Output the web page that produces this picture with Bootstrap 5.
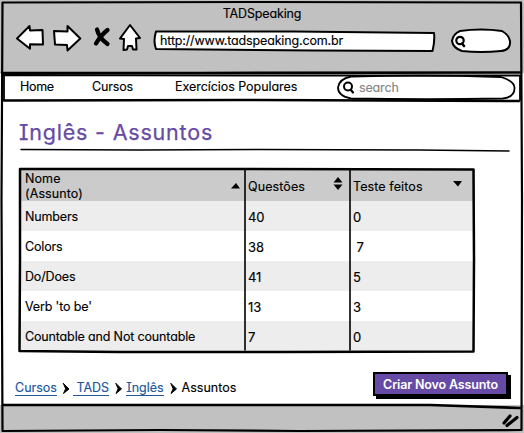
<!DOCTYPE html>
<html lang="pt-br">
<head>
<meta charset="utf-8">
<meta name="viewport" content="width=device-width, initial-scale=1">
<title>TADSpeaking</title>
<link href="https://cdn.jsdelivr.net/npm/bootstrap@5.3.0/dist/css/bootstrap.min.css" rel="stylesheet">
<style>
body{font-family:Inter,"Open Sans",sans-serif;font-size:12.5px;letter-spacing:-.15px;font-feature-settings:"cv11","cv08";line-height:16px;color:#000;background:#fff;overflow:hidden;-webkit-text-stroke:.15px currentColor}
svg{display:block;overflow:visible;fill:none;stroke:#000;stroke-linejoin:round;stroke-linecap:round;flex-shrink:0}
.window{width:524px;height:433px;background:#fff}
.sketch{left:0;top:0;pointer-events:none}
.chrome{height:73px;background:#c1c1c1;padding-top:6px}
.tools{height:32px;padding-left:15px;margin-top:2px}
.address{width:282px;height:20px;margin-left:28px;padding-left:6px;line-height:20px;letter-spacing:-.15px;margin-top:1px}
.finder{width:60px;height:25px;margin-left:15px}
.menu{height:29px;padding-left:20px}
.menu a{color:#000;margin-top:-1px}
.m-home{width:72px;letter-spacing:-.3px}.m-cursos{width:83px}.m-ex{width:162px;letter-spacing:-.05px}
.site-search{width:178px;height:25px;padding-left:22px;color:#868686}
.main-area{padding:17px 13px 0 19px;height:303px}
h1{font-size:21.5px;font-weight:400;line-height:26px;height:33px;color:#664aa5;letter-spacing:.8px;-webkit-text-stroke:.25px #664aa5}
.grid-wrap{width:456px;margin-top:17px}
.grid-wrap .table{table-layout:fixed;--bs-table-bg:transparent;color:#000;width:456px}
.grid-wrap .table>:not(caption)>*>*{padding:1px 0 0 6px;border:0;height:30px;vertical-align:middle;color:#000;box-shadow:none}
.grid-wrap .table>thead>tr>th{font-weight:400;height:32px;padding-top:2px;padding-bottom:0;line-height:15px;background:#cbcbcb;letter-spacing:.1px}
.grid-wrap .table>*>tr>td+td,.grid-wrap .table>*>tr>th+th{padding-left:3px!important}
.grid-wrap .table td+td{font-size:13px}
.grid-wrap tbody tr:nth-child(odd) td{background:#ededed!important}
.c1{width:226px}.c2{width:105px}
.sort-both{padding-right:7px}.sort-down{padding-right:10px}
.trail{letter-spacing:0}
.trail a{color:#20579b;text-decoration:none;border-bottom:1px solid #20579b;line-height:15px;display:block;white-space:pre}
.foot{margin:21px 3px 0 -4px;height:27px}
.create{width:135px;height:24px;border:2px solid #000;border-radius:0;background:#664aa5;color:#fff;font-size:12.5px;font-weight:600;letter-spacing:-.15px;line-height:20px;padding:1px 0 0;box-shadow:3px 3px 0 #000;white-space:nowrap;-webkit-text-stroke:0}
.create:hover{background:#664aa5;color:#fff;border-color:#000}
.status{height:28px;background:#c1c1c1}
</style>
<script src="https://cdn.jsdelivr.net/npm/bootstrap@5.3.0/dist/js/bootstrap.bundle.min.js"></script>
</head>
<body>
<div class="window position-relative">
  <header class="chrome">
    <div class="text-center">TADSpeaking</div>
    <div class="tools d-flex align-items-center">
      <svg width="111" height="32" viewBox="15 23 111 32" stroke-width="2">
        <path fill="#fff" d="M17 37.500L29.500 25L30 29.500L42.500 29L43 43.500L30 43.300V47.800Z"/>
        <path fill="#fff" d="M54 30L67.500 30.500V25L80.300 37.500L67.500 49.500L67 44L55 43.500Z"/>
        <path stroke-width="4.300" d="M97 28.500Q99 37 107.500 43M107.500 29Q101 34 96 42.500"/>
        <path fill="#fff" d="M130 24L140 37L136 37.500L136.500 48.500H133L132 45H128L127 48.500L123.500 49L124 38L120 37.500Z"/>
      </svg>
      <div class="address position-relative">
        <svg class="sketch position-absolute" width="282" height="20" stroke-width="2"><path fill="#fff" d="M2 .500L140 .500L280 2Q281 10 278.500 20L160 19.500L2 18Q-1 10 2 .500Z"/></svg>
        <span class="position-relative">http://www.tadspeaking.com.br</span>
      </div>
      <div class="finder">
        <svg width="60" height="25" stroke-width="2"><path fill="#fff" d="M9 3Q30 0 51 3Q58 7 59 13Q60 22 50 23Q30 25 11 23Q2 20 1 13Q2 6 9 3Z"/><circle cx="9" cy="12.500" r="3.700" stroke-width="2.200"/><path stroke-width="2.500" d="M11 15.500L13 18"/></svg>
      </div>
    </div>
  </header>
  <nav class="menu d-flex align-items-center">
    <a class="m-home text-decoration-none" href="#">Home</a>
    <a class="m-cursos text-decoration-none" href="#">Cursos</a>
    <a class="m-ex text-decoration-none text-nowrap" href="#">Exercícios Populares</a>
    <div class="site-search position-relative d-flex align-items-center">
      <svg class="sketch position-absolute" width="178" height="25" stroke-width="1.800"><path d="M14 1.500Q90 -.500 164 2Q177 6 177.500 12.500Q178 22 166 23.500Q90 25 14 23.500Q1 21 1 12.500Q2 4 14 1.500Z"/><circle cx="11" cy="11.500" r="4" stroke-width="2"/><path stroke-width="2.200" d="M14 15L16 17.500"/></svg>
      <span>search</span>
    </div>
  </nav>
  <main class="main-area">
    <h1 class="m-0 position-relative">Inglês - Assuntos
      <svg class="sketch position-absolute" width="490" height="33" stroke-width="1.500"><path d="M2 30.500L120 31L240 30.500L400 31L490 32"/></svg>
    </h1>
    <div class="grid-wrap position-relative">
      <table class="table m-0">
        <colgroup><col class="c1"><col class="c2"><col></colgroup>
        <thead><tr>
          <th><div class="d-flex align-items-center justify-content-between pe-1"><span>Nome<br>(Assunto)</span><svg width="10" height="6"><path fill="#000" stroke="none" d="M0 5.500L5 0L9 5.500Z"/></svg></div></th>
          <th><div class="sort-both d-flex align-items-center justify-content-between"><span>Questões</span><svg width="10" height="19"><path fill="#000" stroke="none" d="M.500 5.500L5 0L9.500 5.500ZM.500 7.500H9.500L5 13Z"/></svg></div></th>
          <th><div class="sort-down d-flex align-items-center justify-content-between"><span>Teste feitos</span><svg width="12" height="12"><path fill="#000" stroke="none" d="M0 1H9L5 6.500Z"/></svg></div></th>
        </tr></thead>
        <tbody>
          <tr><td>Numbers</td><td>40</td><td>0</td></tr>
          <tr><td>Colors</td><td>38</td><td>&nbsp;7</td></tr>
          <tr><td>Do/Does</td><td>41</td><td>5</td></tr>
          <tr><td>Verb 'to be'</td><td>13</td><td>3</td></tr>
          <tr><td>Countable and Not countable</td><td>7</td><td>0</td></tr>
        </tbody>
      </table>
      <svg class="sketch position-absolute" width="456" height="182"><path stroke-width="2.500" d="M1 0L200 0L454.500 .500L455 90L454.500 182.500L260 183L100 183L.500 182L1 90Z"/><path stroke-width="1.600" d="M226 1V181M331 1V181"/></svg>
    </div>
    <div class="foot d-flex justify-content-between">
      <nav class="trail d-flex align-items-start pt-2">
        <a href="#">Cursos</a>
        <svg width="16" height="17"><path fill="#000" stroke-width="1" d="M6.500 3.500L12 9L6.500 13.500L8.500 9Z"/></svg>
        <a href="#"> TADS</a>
        <svg width="17" height="17"><path fill="#000" stroke-width="1" d="M7 3.500L12.500 9L7 13.500L9 9Z"/></svg>
        <a href="#">Inglês</a>
        <svg width="18" height="17"><path fill="#000" stroke-width="1" d="M7 3.500L12.500 9L7 13.500L9 9Z"/></svg>
        <span>Assuntos</span>
      </nav>
      <button class="create btn" type="button">Criar Novo Assunto</button>
    </div>
  </main>
  <footer class="status"></footer>
  <svg class="sketch position-absolute" width="524" height="433">
    <path stroke-width="2.200" d="M2.500 2.500L260 2L521 2.500L522 200L521.500 430L300 431L160 430L2.500 431L1.500 200Z"/>
    <path stroke-width="2.600" d="M2 73L200 73L520 72.500M4 100.500L240 100L519 101M3 405L250 405L430 405L520 408"/>
    <path stroke-width="1.800" d="M3.500 75L260 75.500L520 75.500V100M4 75V100"/>
    <path stroke-width="3.200" d="M504 423L510 416M507 425.500L517 417.500"/>
  </svg>
</div>
</body>
</html>
